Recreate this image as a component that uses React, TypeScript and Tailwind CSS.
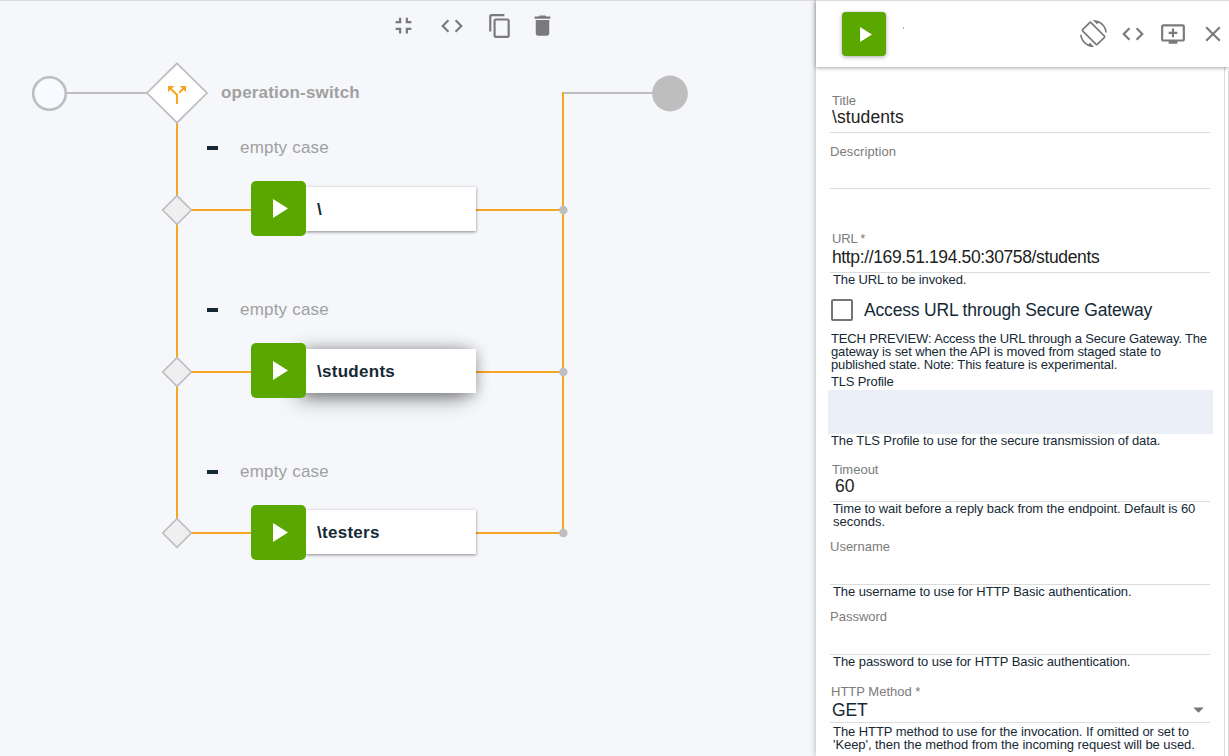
import React from "react";
import {
  MdAddToQueue,
  MdArrowDropDown,
  MdClose,
  MdCode,
  MdContentCopy,
  MdDelete,
  MdFullscreenExit,
  MdScreenRotation,
} from "react-icons/md";

const ORANGE = "#f5a623";
const GREY = "#bebebe";

function Play({ className }: { className: string }) {
  return (
    <svg viewBox="0 0 15 19" className={className} fill="#fff">
      <path d="M0 0L15 9.5L0 19Z" />
    </svg>
  );
}

function Connectors() {
  return (
    <svg className="absolute left-0 top-0" width="816" height="756" fill="none">
      <path d="M66 93H148M564 93H653" stroke={GREY} strokeWidth="2" />
      <path
        d="M177 122V533M563 92V534M177 210H563M177 372H563M177 533H563"
        stroke={ORANGE}
        strokeWidth="2"
      />
      <circle cx="49.5" cy="93.5" r="16.3" fill="#f7fbff" stroke={GREY} strokeWidth="2.6" />
      <circle cx="670" cy="93.5" r="17.9" fill={GREY} />
      <path d="M177 63.3L207 93L177 122.7L147 93Z" fill="#fff" stroke={GREY} strokeWidth="1.7" />
      <g transform="translate(168 86)">
        <path d="M0 0H6.3L0 6.3ZM18 0H11.700L18 6.300Z" fill={ORANGE} />
        <path d="M2.500 2.500L9 8.700V18M15.500 2.500L11.200 6.700" stroke={ORANGE} strokeWidth="2.1" />
      </g>
      {[210, 372, 533].map((y) => (
        <g key={y} transform={`translate(0 ${y})`}>
          <path d="M177 -14.3L191.3 0L177 14.3L162.7 0Z" fill="#efefef" stroke={GREY} strokeWidth="1.7" />
          <circle cx="563.3" cy="0" r="4.3" fill={GREY} />
        </g>
      ))}
    </svg>
  );
}

function Case({ name, pos, box = "", selected }: { name: string; pos: string; box?: string; selected?: boolean }) {
  return (
    <div className={`absolute left-[206px] w-[271px] ${pos}`}>
      <div className="flex h-5 items-center">
        <span className="mt-px ml-px h-1 w-[11px] bg-[#152935]" />
        <span className="mt-[2px] ml-[22px] text-[17px] leading-5 tracking-[0.2px] text-[#a0a0a0]">empty case</span>
      </div>
      <div className="mt-[24px] ml-[45px] flex h-[55px] items-center">
        <div className="relative z-10 flex h-[55px] w-[55px] shrink-0 items-center rounded-[5px] bg-[#5aa700] pl-[22px]">
          <Play className="h-[19px] w-[15px]" />
        </div>
        <div
          className={`flex h-[44px] w-[170px] items-center bg-white pt-[2px] pl-[11px] text-[17px] font-bold tracking-[0.28px] text-[#152935] ${box} ${
            selected
              ? "shadow-[-10px_5px_22px_rgba(0,0,0,0.4),0_2px_14px_rgba(0,0,0,0.3)]"
              : "shadow-[0_1px_3px_rgba(0,0,0,0.45)]"
          }`}
        >
          {name}
        </div>
      </div>
    </div>
  );
}

function Label({ children, className = "" }: { children: React.ReactNode; className?: string }) {
  return <div className={`text-[13px] leading-[13px] text-[#7b7b7b] ${className}`}>{children}</div>;
}

function Help({ children, className = "" }: { children: React.ReactNode; className?: string }) {
  return (
    <div className={`whitespace-nowrap text-[13px] leading-[13px] text-[#152935] ${className}`}>{children}</div>
  );
}

function Field({ children, className = "" }: { children: React.ReactNode; className?: string }) {
  return <div className={`mr-[13px] ml-[14px] border-b border-[#dcdcdc] ${className}`}>{children}</div>;
}

export default function App() {
  return (
    <div
      className="flex h-[756px] w-[1229px] overflow-hidden bg-[#f5f7fa]"
      style={{ fontFamily: '"Liberation Sans", Arial, sans-serif' }}
    >
      <main className="relative w-[816px] shrink-0 border-t border-[#dcdcdc]">
        <div className="absolute inset-0 -top-px">
          <Connectors />
          <div className="absolute top-[12px] left-[390px] flex items-center text-[#7a7a7a]">
            <MdFullscreenExit className="size-[27px]" />
            <MdCode className="ml-[21.5px] size-[26px]" />
            <MdContentCopy className="ml-[22px] size-[26px]" />
            <MdDelete className="ml-[16px] size-[27px]" />
          </div>
          <div className="absolute top-[83px] left-[221px] text-[17px] leading-5 font-bold tracking-[0.18px] text-[#a0a0a0]">
            operation-switch
          </div>
          <Case name="\" pos="top-[137px]" />
          <Case name="\students" pos="top-[299px]" selected />
          <Case name="\testers" pos="top-[461px]" box="relative -top-px" />
        </div>
      </main>

      <aside className="relative z-10 flex w-[413px] shrink-0 flex-col bg-white shadow-[0_0_6px_rgba(0,0,0,0.3)]">
        <header className="relative z-10 flex h-[67px] shrink-0 items-center border-t border-[#dcdcdc] bg-white shadow-[0_1px_4px_rgba(0,0,0,0.35)]">
          <div className="ml-[26px] flex size-[44px] items-center rounded-[4px] bg-[#5aa700] pl-[18px] shadow-[0_1px_4px_rgba(0,0,0,0.35)]">
            <Play className="h-[15px] w-3" />
          </div>
          <span className="mb-3 ml-[17px] h-[2px] w-px bg-[#b0b0b0]" />
          <div className="ml-auto flex items-center text-[#7a7a7a]">
            <MdScreenRotation className="mb-px size-[27px]" />
            <MdCode className="ml-[13px] size-[26px]" />
            <MdAddToQueue className="ml-[14px] size-[26px]" />
            <MdClose className="mr-[3px] ml-[14px] size-[26px]" />
          </div>
        </header>

        <div className="flex min-h-0 flex-1">
          <form className="w-[409px] shrink-0 border-r border-[#dcdcdc]">
            <Field className="mr-[14px] pt-[27px] pb-[5px] pl-[2px]">
              <Label>Title</Label>
              <div className="text-[17.5px] leading-5 tracking-[0.1px] text-[#222]">\students</div>
            </Field>
            <Field className="mr-[14px] pt-3 pb-[30px]">
              <Label className="tracking-[0.1px]">Description</Label>
            </Field>
            <Field className="mr-[14px] pt-[43px] pb-[5px] pl-[2px]">
              <Label className="tracking-[-0.2px]">URL *</Label>
              <div className="mt-0.5 text-[17.5px] leading-5 tracking-[-0.37px] text-[#222]">
                http://169.51.194.50:30758/students
              </div>
            </Field>
            <Help className="ml-[17px] tracking-[-0.13px]">The URL to be invoked.</Help>

            <label className="mt-[13px] ml-[15px] flex h-[22px] items-center text-[17.5px] tracking-[-0.18px] text-[#152935]">
              <span className="size-[22px] rounded-[2px] border-2 border-[#757575]" />
              <span className="ml-[11px] whitespace-nowrap">Access URL through Secure Gateway</span>
            </label>
            <Help className="mt-[11px] ml-[15px] tracking-[-0.12px]">
              <div className="tracking-[-0.15px]">TECH PREVIEW: Access the URL through a Secure Gateway. The</div>
              <div>gateway is set when the API is moved from staged state to</div>
              <div>published state. Note: This feature is experimental.</div>
            </Help>
            <Help className="mt-1 ml-[15px] tracking-[-0.15px]">TLS Profile</Help>
            <div className="mt-0.5 mr-[11.5px] ml-[11.5px] h-[44px] bg-[#e9eef7]" />
            <Help className="ml-[15px] tracking-[-0.11px]">
              The TLS Profile to use for the secure transmission of data.
            </Help>

            <Field className="mr-[14px] pt-4 pb-[5px] pl-[2px]">
              <Label>Timeout</Label>
              <div className="pl-[3px] text-[17.5px] leading-5 text-[#222]">60</div>
            </Field>
            <Help className="ml-[17px]">
              <div className="tracking-[-0.09px]">
                Time to wait before a reply back from the endpoint. Default is 60
              </div>
              <div>seconds.</div>
            </Help>
            <Field className="mr-[14px] pt-3 pb-[31px]">
              <Label>Username</Label>
            </Field>
            <Help className="ml-[17px] tracking-[-0.08px]">The username to use for HTTP Basic authentication.</Help>
            <Field className="mr-[14px] pt-3 pb-[31px]">
              <Label>Password</Label>
            </Field>
            <Help className="ml-[17px] tracking-[-0.06px]">The password to use for HTTP Basic authentication.</Help>
            <Field className="mr-[14px] pt-[17px] pb-[2px] pl-px">
              <Label>HTTP Method *</Label>
              <div className="mt-0.5 flex h-5 items-center justify-between pl-px text-[17.5px] leading-5 tracking-[-0.2px] text-[#152935]">
                <span>GET</span>
                <MdArrowDropDown className="-mr-px mb-0.5 size-[25px] text-[#757575]" />
              </div>
            </Field>
            <Help className="mt-0.5 ml-[17px] tracking-[-0.06px]">
              <div>The HTTP method to use for the invocation. If omitted or set to</div>
              <div>'Keep', then the method from the incoming request will be used.</div>
            </Help>
          </form>
          <div className="mt-1 ml-[3px] w-px bg-[#dcdcdc]" />
        </div>
      </aside>
    </div>
  );
}
